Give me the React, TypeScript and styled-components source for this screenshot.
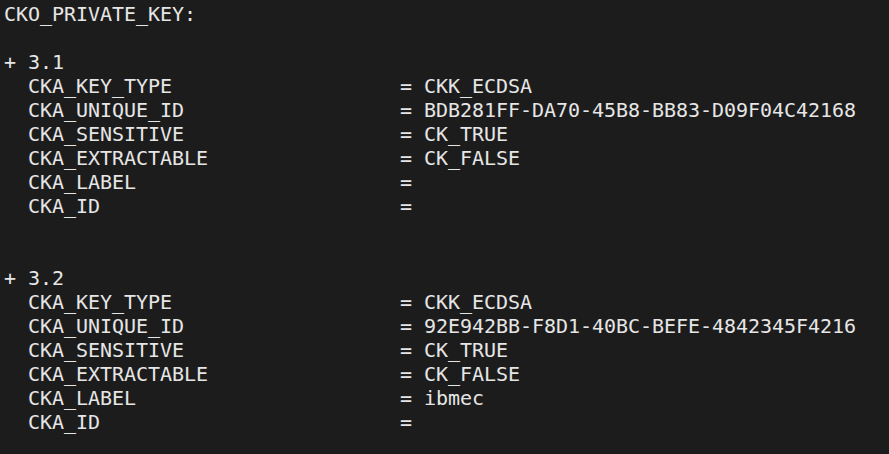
import React from "react";
import styled, { createGlobalStyle } from "styled-components";

const Global = createGlobalStyle`
  html, body { margin: 0; padding: 0; background: #1c1c1c; }
  body { width: 889px; height: 454px; overflow: hidden; }
`;

const Terminal = styled.div`
  box-sizing: border-box;
  width: 889px;
  height: 454px;
  background: #1c1c1c;
  color: #e6e6e6;
  font-family: "DejaVu Sans Mono", "Liberation Mono", monospace;
  font-size: 20px;
  letter-spacing: -0.04px;
  line-height: 24px;
  padding: 2px 0 0 4px;
  display: flex;
  flex-direction: column;
`;

const Line = styled.div<{ $gap?: number }>`
  height: 24px;
  white-space: pre;
  margin-top: ${(p) => (p.$gap ?? 0) * 24}px;
`;

const Row = styled.div`
  height: 24px;
  display: flex;
  white-space: pre;
`;

const Key = styled.span`
  box-sizing: border-box;
  width: 396px;
  padding-left: 24px;
  flex: none;
`;

const Value = styled.span``;

type Attr = [string, string];

const objects: { id: string; attrs: Attr[] }[] = [
  {
    id: "3.1",
    attrs: [
      ["CKA_KEY_TYPE", "CKK_ECDSA"],
      ["CKA_UNIQUE_ID", "BDB281FF-DA70-45B8-BB83-D09F04C42168"],
      ["CKA_SENSITIVE", "CK_TRUE"],
      ["CKA_EXTRACTABLE", "CK_FALSE"],
      ["CKA_LABEL", ""],
      ["CKA_ID", ""],
    ],
  },
  {
    id: "3.2",
    attrs: [
      ["CKA_KEY_TYPE", "CKK_ECDSA"],
      ["CKA_UNIQUE_ID", "92E942BB-F8D1-40BC-BEFE-4842345F4216"],
      ["CKA_SENSITIVE", "CK_TRUE"],
      ["CKA_EXTRACTABLE", "CK_FALSE"],
      ["CKA_LABEL", "ibmec"],
      ["CKA_ID", ""],
    ],
  },
];

export default function App() {
  return (
    <>
      <Global />
      <Terminal>
        <Line>CKO_PRIVATE_KEY:</Line>
        {objects.map((o, i) => (
          <React.Fragment key={o.id}>
            <Line $gap={i === 0 ? 1 : 2}>{"+ " + o.id}</Line>
            {o.attrs.map(([k, v]) => (
              <Row key={k}>
                <Key>{k}</Key>
                <Value>{"= " + v}</Value>
              </Row>
            ))}
          </React.Fragment>
        ))}
      </Terminal>
    </>
  );
}
